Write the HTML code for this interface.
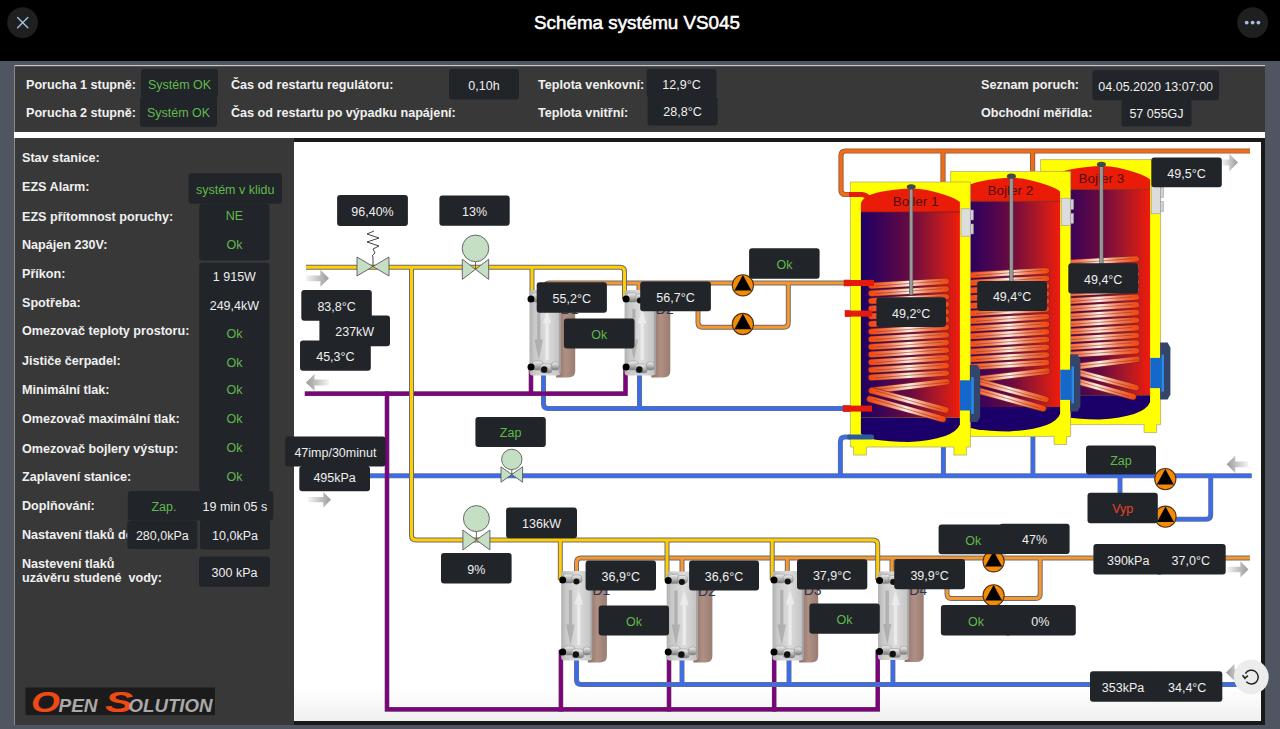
<!DOCTYPE html><html><head><meta charset="utf-8"><title>Schéma systému VS045</title><style>
html,body{margin:0;padding:0;width:1280px;height:729px;overflow:hidden;background:#000}svg{display:block}text{font-family:"Liberation Sans", sans-serif}
</style></head><body>
<svg width="1280" height="729" viewBox="0 0 1280 729">
<defs>
<linearGradient id="tankg" x1="0" x2="1" y1="0" y2="0"><stop offset="0" stop-color="#1e0064"/><stop offset="0.3" stop-color="#4a0550"/><stop offset="0.5" stop-color="#6a0a40"/><stop offset="0.75" stop-color="#a81828"/><stop offset="1" stop-color="#f01c0a"/></linearGradient>
<linearGradient id="coilg" x1="0" x2="1" y1="0" y2="0"><stop offset="0" stop-color="#f44810"/><stop offset="0.25" stop-color="#f5825a"/><stop offset="0.5" stop-color="#fff0e6"/><stop offset="0.75" stop-color="#f5825a"/><stop offset="1" stop-color="#f44810"/></linearGradient>
<linearGradient id="plateg" x1="0" x2="1" y1="0" y2="0"><stop offset="0" stop-color="#b0b0b0"/><stop offset="0.15" stop-color="#c8c8c8"/><stop offset="0.55" stop-color="#dcdcdc"/><stop offset="1" stop-color="#c2c2c2"/></linearGradient>
<linearGradient id="backg" x1="0" x2="1" y1="0" y2="0"><stop offset="0" stop-color="#8a6e64"/><stop offset="0.5" stop-color="#b09084"/><stop offset="1" stop-color="#9a7c70"/></linearGradient>
<linearGradient id="arrR" x1="0" x2="1" y1="0" y2="0"><stop offset="0" stop-color="#f4f4f4"/><stop offset="1" stop-color="#9a9a9a"/></linearGradient>
<linearGradient id="arrL" x1="1" x2="0" y1="0" y2="0"><stop offset="0" stop-color="#f4f4f4"/><stop offset="1" stop-color="#9a9a9a"/></linearGradient>
<linearGradient id="botg" x1="0" x2="0" y1="0" y2="1"><stop offset="0" stop-color="#ffffff"/><stop offset="1" stop-color="#f0f0f0"/></linearGradient>
<linearGradient id="fitg" x1="0" x2="0" y1="0" y2="1"><stop offset="0" stop-color="#f0f0f0"/><stop offset="0.5" stop-color="#b8b8b8"/><stop offset="1" stop-color="#7a7a7a"/></linearGradient>
</defs>
<rect x="0" y="0" width="1280" height="61" fill="#000"/>
<circle cx="22.6" cy="22.6" r="15.4" fill="#1e201f"/>
<path d="M17.6,17.6 L27.8,27.8 M27.8,17.6 L17.6,27.8" stroke="#a9bde0" stroke-width="1.4" stroke-linecap="round"/>
<circle cx="1252.6" cy="22.6" r="15.4" fill="#1e201f"/>
<circle cx="1246.7" cy="22.6" r="1.9" fill="#a9bde0"/>
<circle cx="1252.6" cy="22.6" r="1.9" fill="#a9bde0"/>
<circle cx="1258.4" cy="22.6" r="1.9" fill="#a9bde0"/>
<text x="637" y="28.5" font-size="19" fill="#fff" stroke="#fff" stroke-width="0.55" text-anchor="middle" textLength="206" lengthAdjust="spacingAndGlyphs">Schéma systému VS045</text>
<rect x="0" y="61" width="1280" height="668" fill="#4f5661"/>
<rect x="14" y="65" width="1251" height="67" fill="#383838"/>
<rect x="14" y="65" width="1251" height="1.2" fill="#c8c8c8"/>
<rect x="14" y="65" width="1" height="660" fill="#8a8a8a"/>
<rect x="14" y="132" width="1251" height="6" fill="#fdfdfd"/>
<rect x="15" y="138" width="279" height="587" fill="#383838"/>
<rect x="294" y="138" width="971" height="587" fill="#171a18"/>
<rect x="294" y="142" width="967" height="579" fill="#ffffff"/>
<rect x="294" y="688" width="967" height="33" fill="url(#botg)"/>
<text transform="translate(26,89) scale(0.935,1)" font-size="13.5" font-weight="bold" fill="#f0f0f0">Porucha 1 stupně:</text>
<text transform="translate(26,117) scale(0.935,1)" font-size="13.5" font-weight="bold" fill="#f0f0f0">Porucha 2 stupně:</text>
<text transform="translate(231,89) scale(0.935,1)" font-size="13.5" font-weight="bold" fill="#f0f0f0">Čas od restartu regulátoru:</text>
<text transform="translate(231,117) scale(0.935,1)" font-size="13.5" font-weight="bold" fill="#f0f0f0">Čas od restartu po výpadku napájení:</text>
<text transform="translate(538,89) scale(0.935,1)" font-size="13.5" font-weight="bold" fill="#f0f0f0">Teplota venkovní:</text>
<text transform="translate(538,117) scale(0.935,1)" font-size="13.5" font-weight="bold" fill="#f0f0f0">Teplota vnitřní:</text>
<text transform="translate(981,89) scale(0.935,1)" font-size="13.5" font-weight="bold" fill="#f0f0f0">Seznam poruch:</text>
<text transform="translate(981,117) scale(0.935,1)" font-size="13.5" font-weight="bold" fill="#f0f0f0">Obchodní měřidla:</text>
<rect x="141" y="69" width="77.0" height="29.0" rx="3" fill="#212428"/><text x="179.5" y="88.9" font-size="12.5" fill="#60ba4c" text-anchor="middle">Systém OK</text>
<rect x="140" y="97" width="77.0" height="30.0" rx="3" fill="#212428"/><text x="178.5" y="117.4" font-size="12.5" fill="#60ba4c" text-anchor="middle">Systém OK</text>
<rect x="449" y="69" width="70.0" height="30.5" rx="3" fill="#212428"/><text x="484.0" y="89.7" font-size="12.5" fill="#efefef" text-anchor="middle">0,10h</text>
<rect x="646.6" y="69" width="69.9" height="28.5" rx="3" fill="#212428"/><text x="681.5" y="88.7" font-size="12.5" fill="#efefef" text-anchor="middle">12,9°C</text>
<rect x="647.5" y="96.5" width="70.1" height="28.9" rx="3" fill="#212428"/><text x="682.5" y="116.4" font-size="12.5" fill="#efefef" text-anchor="middle">28,8°C</text>
<rect x="1092.4" y="70.3" width="126.6" height="30.0" rx="3" fill="#212428"/><text x="1155.7" y="90.7" font-size="12.5" fill="#efefef" text-anchor="middle">04.05.2020 13:07:00</text>
<rect x="1121.5" y="99.5" width="70.0" height="27.0" rx="3" fill="#212428"/><text x="1156.5" y="118.4" font-size="12.5" fill="#efefef" text-anchor="middle">57 055GJ</text>
<text transform="translate(22,162) scale(0.935,1)" font-size="13.5" font-weight="bold" fill="#f0f0f0">Stav stanice:</text>
<text transform="translate(22,191.4) scale(0.935,1)" font-size="13.5" font-weight="bold" fill="#f0f0f0">EZS Alarm:</text>
<text transform="translate(22,221) scale(0.935,1)" font-size="13.5" font-weight="bold" fill="#f0f0f0">EZS přítomnost poruchy:</text>
<text transform="translate(22,248.6) scale(0.935,1)" font-size="13.5" font-weight="bold" fill="#f0f0f0">Napájen 230V:</text>
<text transform="translate(22,277.5) scale(0.935,1)" font-size="13.5" font-weight="bold" fill="#f0f0f0">Příkon:</text>
<text transform="translate(22,307) scale(0.935,1)" font-size="13.5" font-weight="bold" fill="#f0f0f0">Spotřeba:</text>
<text transform="translate(22,335.4) scale(0.935,1)" font-size="13.5" font-weight="bold" fill="#f0f0f0">Omezovač teploty prostoru:</text>
<text transform="translate(22,364.8) scale(0.935,1)" font-size="13.5" font-weight="bold" fill="#f0f0f0">Jističe čerpadel:</text>
<text transform="translate(22,394) scale(0.935,1)" font-size="13.5" font-weight="bold" fill="#f0f0f0">Minimální tlak:</text>
<text transform="translate(22,423) scale(0.935,1)" font-size="13.5" font-weight="bold" fill="#f0f0f0">Omezovač maximální tlak:</text>
<text transform="translate(22,452.7) scale(0.935,1)" font-size="13.5" font-weight="bold" fill="#f0f0f0">Omezovač bojlery výstup:</text>
<text transform="translate(22,480.9) scale(0.935,1)" font-size="13.5" font-weight="bold" fill="#f0f0f0">Zaplavení stanice:</text>
<text transform="translate(22,509.5) scale(0.935,1)" font-size="13.5" font-weight="bold" fill="#f0f0f0">Doplňování:</text>
<text transform="translate(22,538.6) scale(0.935,1)" font-size="13.5" font-weight="bold" fill="#f0f0f0">Nastavení tlaků do</text>
<text transform="translate(22,567.5) scale(0.935,1)" font-size="13.5" font-weight="bold" fill="#f0f0f0">Nastevení tlaků</text>
<text transform="translate(22,581.7) scale(0.935,1)" font-size="13.5" font-weight="bold" fill="#f0f0f0">uzávěru studené&#160; vody:</text>
<rect x="188.6" y="173.3" width="93.3" height="30.4" rx="3" fill="#212428"/><text x="235.2" y="193.9" font-size="12.5" fill="#60ba4c" text-anchor="middle">systém v klidu</text>
<rect x="199.2" y="204" width="70.3" height="56.5" rx="3" fill="#212428"/>
<rect x="199.2" y="262.7" width="70.3" height="228.3" rx="3" fill="#212428"/>
<text x="234.4" y="220.2" font-size="12.5" fill="#60ba4c" text-anchor="middle">NE</text>
<text x="234.4" y="248.7" font-size="12.5" fill="#60ba4c" text-anchor="middle">Ok</text>
<text x="234.4" y="281.2" font-size="12.5" fill="#efefef" text-anchor="middle">1 915W</text>
<text x="234.4" y="309.7" font-size="12.5" fill="#efefef" text-anchor="middle">249,4kW</text>
<text x="234.4" y="338.2" font-size="12.5" fill="#60ba4c" text-anchor="middle">Ok</text>
<text x="234.4" y="367.2" font-size="12.5" fill="#60ba4c" text-anchor="middle">Ok</text>
<text x="234.4" y="394.2" font-size="12.5" fill="#60ba4c" text-anchor="middle">Ok</text>
<text x="234.4" y="423.2" font-size="12.5" fill="#60ba4c" text-anchor="middle">Ok</text>
<text x="234.4" y="452.2" font-size="12.5" fill="#60ba4c" text-anchor="middle">Ok</text>
<text x="234.4" y="481.2" font-size="12.5" fill="#60ba4c" text-anchor="middle">Ok</text>
<rect x="127.8" y="491" width="72.2" height="29.5" rx="3" fill="#212428"/><text x="163.9" y="511.1" font-size="12.5" fill="#60ba4c" text-anchor="middle">Zap.</text>
<rect x="196.7" y="491" width="76.5" height="29.5" rx="3" fill="#212428"/><text x="234.9" y="511.1" font-size="12.5" fill="#efefef" text-anchor="middle">19 min 05 s</text>
<rect x="127.3" y="520.5" width="70.0" height="28.5" rx="3" fill="#212428"/><text x="162.3" y="540.1" font-size="12.5" fill="#efefef" text-anchor="middle">280,0kPa</text>
<rect x="200" y="520" width="70.0" height="29.6" rx="3" fill="#212428"/><text x="235.0" y="540.2" font-size="12.5" fill="#efefef" text-anchor="middle">10,0kPa</text>
<rect x="199" y="556.6" width="71.0" height="30.2" rx="3" fill="#212428"/><text x="234.5" y="577.1" font-size="12.5" fill="#efefef" text-anchor="middle">300 kPa</text>
<path d="M543.5,370 V404 Q543.5,408.5 548,408.5 H846" fill="none" stroke="#6a7080" stroke-width="5" stroke-linejoin="round"/><path d="M639.5,370 V408.5" fill="none" stroke="#6a7080" stroke-width="5" stroke-linejoin="round"/><path d="M360,475.8 H1251.6" fill="none" stroke="#6a7080" stroke-width="5" stroke-linejoin="round"/><path d="M840.4,475.8 V441.5 Q840.4,437 845,437 H868" fill="none" stroke="#6a7080" stroke-width="5" stroke-linejoin="round"/><path d="M943.4,475.8 V447" fill="none" stroke="#6a7080" stroke-width="5" stroke-linejoin="round"/><path d="M1032.9,475.8 V435" fill="none" stroke="#6a7080" stroke-width="5" stroke-linejoin="round"/><path d="M1120,475.8 V493" fill="none" stroke="#6a7080" stroke-width="5" stroke-linejoin="round"/><path d="M1210.7,475.8 V514.8 Q1210.7,519.3 1206.2,519.3 H1165" fill="none" stroke="#6a7080" stroke-width="5" stroke-linejoin="round"/><path d="M543.5,370 V404 Q543.5,408.5 548,408.5 H846" fill="none" stroke="#3a6cf0" stroke-width="3.4" stroke-linejoin="round"/><path d="M639.5,370 V408.5" fill="none" stroke="#3a6cf0" stroke-width="3.4" stroke-linejoin="round"/><path d="M360,475.8 H1251.6" fill="none" stroke="#3a6cf0" stroke-width="3.4" stroke-linejoin="round"/><path d="M840.4,475.8 V441.5 Q840.4,437 845,437 H868" fill="none" stroke="#3a6cf0" stroke-width="3.4" stroke-linejoin="round"/><path d="M943.4,475.8 V447" fill="none" stroke="#3a6cf0" stroke-width="3.4" stroke-linejoin="round"/><path d="M1032.9,475.8 V435" fill="none" stroke="#3a6cf0" stroke-width="3.4" stroke-linejoin="round"/><path d="M1120,475.8 V493" fill="none" stroke="#3a6cf0" stroke-width="3.4" stroke-linejoin="round"/><path d="M1210.7,475.8 V514.8 Q1210.7,519.3 1206.2,519.3 H1165" fill="none" stroke="#3a6cf0" stroke-width="3.4" stroke-linejoin="round"/>
<path d="M545,299 V287.5 Q545,283 549.5,283 H844" fill="none" stroke="#6e6a78" stroke-width="5" stroke-linejoin="round"/><path d="M639,283 V299" fill="none" stroke="#6e6a78" stroke-width="5" stroke-linejoin="round"/><path d="M698,311 V322.7 Q698,327.2 702.5,327.2 H783.8 Q788.3,327.2 788.3,322.7 V283" fill="none" stroke="#6e6a78" stroke-width="5" stroke-linejoin="round"/><path d="M576.5,581 V562.5 Q576.5,558 581,558 H1250" fill="none" stroke="#6e6a78" stroke-width="5" stroke-linejoin="round"/><path d="M682,558 V581" fill="none" stroke="#6e6a78" stroke-width="5" stroke-linejoin="round"/><path d="M787.3,558 V581" fill="none" stroke="#6e6a78" stroke-width="5" stroke-linejoin="round"/><path d="M892,558 V581" fill="none" stroke="#6e6a78" stroke-width="5" stroke-linejoin="round"/><path d="M947,589 V593.9 Q947,598.4 951.5,598.4 H1035.7 Q1040.2,598.4 1040.2,593.9 V558" fill="none" stroke="#6e6a78" stroke-width="5" stroke-linejoin="round"/><path d="M545,299 V287.5 Q545,283 549.5,283 H844" fill="none" stroke="#f7982a" stroke-width="3" stroke-linejoin="round"/><path d="M639,283 V299" fill="none" stroke="#f7982a" stroke-width="3" stroke-linejoin="round"/><path d="M698,311 V322.7 Q698,327.2 702.5,327.2 H783.8 Q788.3,327.2 788.3,322.7 V283" fill="none" stroke="#f7982a" stroke-width="3" stroke-linejoin="round"/><path d="M576.5,581 V562.5 Q576.5,558 581,558 H1250" fill="none" stroke="#f7982a" stroke-width="3" stroke-linejoin="round"/><path d="M682,558 V581" fill="none" stroke="#f7982a" stroke-width="3" stroke-linejoin="round"/><path d="M787.3,558 V581" fill="none" stroke="#f7982a" stroke-width="3" stroke-linejoin="round"/><path d="M892,558 V581" fill="none" stroke="#f7982a" stroke-width="3" stroke-linejoin="round"/><path d="M947,589 V593.9 Q947,598.4 951.5,598.4 H1035.7 Q1040.2,598.4 1040.2,593.9 V558" fill="none" stroke="#f7982a" stroke-width="3" stroke-linejoin="round"/>
<path d="M866,194.5 H845.5 Q841,194.5 841,190 V155.5 Q841,151 845.5,151 H1250" fill="none" stroke="#8a5a50" stroke-width="5.2" stroke-linejoin="round"/><path d="M943,151 V182" fill="none" stroke="#8a5a50" stroke-width="5.2" stroke-linejoin="round"/><path d="M1032.6,151 V171.5" fill="none" stroke="#8a5a50" stroke-width="5.2" stroke-linejoin="round"/><path d="M866,194.5 H845.5 Q841,194.5 841,190 V155.5 Q841,151 845.5,151 H1250" fill="none" stroke="#f36c10" stroke-width="3.4" stroke-linejoin="round"/><path d="M943,151 V182" fill="none" stroke="#f36c10" stroke-width="3.4" stroke-linejoin="round"/><path d="M1032.6,151 V171.5" fill="none" stroke="#f36c10" stroke-width="3.4" stroke-linejoin="round"/>
<path d="M307,393.6 H625.5 V367" fill="none" stroke="#5a3a5a" stroke-width="4.6" stroke-linejoin="miter" stroke-linecap="square"/><path d="M531,367 V393.6" fill="none" stroke="#5a3a5a" stroke-width="4.6" stroke-linejoin="miter" stroke-linecap="square"/><path d="M387,393.6 V709.4 H877.7 V652" fill="none" stroke="#5a3a5a" stroke-width="4.6" stroke-linejoin="miter" stroke-linecap="square"/><path d="M560.9,652 V709.4" fill="none" stroke="#5a3a5a" stroke-width="4.6" stroke-linejoin="miter" stroke-linecap="square"/><path d="M669,652 V709.4" fill="none" stroke="#5a3a5a" stroke-width="4.6" stroke-linejoin="miter" stroke-linecap="square"/><path d="M774.2,652 V709.4" fill="none" stroke="#5a3a5a" stroke-width="4.6" stroke-linejoin="miter" stroke-linecap="square"/><path d="M307,393.6 H625.5 V367" fill="none" stroke="#800080" stroke-width="3.4" stroke-linejoin="miter" stroke-linecap="square"/><path d="M531,367 V393.6" fill="none" stroke="#800080" stroke-width="3.4" stroke-linejoin="miter" stroke-linecap="square"/><path d="M387,393.6 V709.4 H877.7 V652" fill="none" stroke="#800080" stroke-width="3.4" stroke-linejoin="miter" stroke-linecap="square"/><path d="M560.9,652 V709.4" fill="none" stroke="#800080" stroke-width="3.4" stroke-linejoin="miter" stroke-linecap="square"/><path d="M669,652 V709.4" fill="none" stroke="#800080" stroke-width="3.4" stroke-linejoin="miter" stroke-linecap="square"/><path d="M774.2,652 V709.4" fill="none" stroke="#800080" stroke-width="3.4" stroke-linejoin="miter" stroke-linecap="square"/>
<path d="M576.5,655 V680.1 Q576.5,684.6 581,684.6 H1245" fill="none" stroke="#6a7080" stroke-width="5" stroke-linejoin="round"/><path d="M682,655 V684.6" fill="none" stroke="#6a7080" stroke-width="5" stroke-linejoin="round"/><path d="M789,655 V684.6" fill="none" stroke="#6a7080" stroke-width="5" stroke-linejoin="round"/><path d="M892.9,655 V684.6" fill="none" stroke="#6a7080" stroke-width="5" stroke-linejoin="round"/><path d="M576.5,655 V680.1 Q576.5,684.6 581,684.6 H1245" fill="none" stroke="#3a6cf0" stroke-width="3.4" stroke-linejoin="round"/><path d="M682,655 V684.6" fill="none" stroke="#3a6cf0" stroke-width="3.4" stroke-linejoin="round"/><path d="M789,655 V684.6" fill="none" stroke="#3a6cf0" stroke-width="3.4" stroke-linejoin="round"/><path d="M892.9,655 V684.6" fill="none" stroke="#3a6cf0" stroke-width="3.4" stroke-linejoin="round"/>
<path d="M306,267.3 H620 Q624.5,267.3 624.5,271.8 V299" fill="none" stroke="#6e6a78" stroke-width="5" stroke-linejoin="round"/><path d="M532,267.3 V299" fill="none" stroke="#6e6a78" stroke-width="5" stroke-linejoin="round"/><path d="M411.5,267.3 V535.5 Q411.5,540 416,540 H873 Q877.7,540 877.7,544.5 V580" fill="none" stroke="#6e6a78" stroke-width="5" stroke-linejoin="round"/><path d="M560.3,540 V580" fill="none" stroke="#6e6a78" stroke-width="5" stroke-linejoin="round"/><path d="M667,540 V580" fill="none" stroke="#6e6a78" stroke-width="5" stroke-linejoin="round"/><path d="M772.2,540 V580" fill="none" stroke="#6e6a78" stroke-width="5" stroke-linejoin="round"/><path d="M306,267.3 H620 Q624.5,267.3 624.5,271.8 V299" fill="none" stroke="#ffcf00" stroke-width="3" stroke-linejoin="round"/><path d="M532,267.3 V299" fill="none" stroke="#ffcf00" stroke-width="3" stroke-linejoin="round"/><path d="M411.5,267.3 V535.5 Q411.5,540 416,540 H873 Q877.7,540 877.7,544.5 V580" fill="none" stroke="#ffcf00" stroke-width="3" stroke-linejoin="round"/><path d="M560.3,540 V580" fill="none" stroke="#ffcf00" stroke-width="3" stroke-linejoin="round"/><path d="M667,540 V580" fill="none" stroke="#ffcf00" stroke-width="3" stroke-linejoin="round"/><path d="M772.2,540 V580" fill="none" stroke="#ffcf00" stroke-width="3" stroke-linejoin="round"/>
<rect x="844" y="280" width="30" height="6" fill="#e41a0c" stroke="#a02020" stroke-width="0.5"/>
<rect x="845" y="310.6" width="27" height="6" fill="#e41a0c" stroke="#a02020" stroke-width="0.5"/>
<rect x="843" y="405.6" width="29" height="6" fill="#e41a0c" stroke="#a02020" stroke-width="0.5"/>
<path d="M1040.6,159.6 H1160.6 V424.6 H1156.6 V432.6 H1144.1 V424.6 H1056.6 V432.6 H1043.6 V424.6 H1040.6 Z" fill="#ffff00" stroke="#a8a070" stroke-width="0.7"/><path d="M1051.1,189.6 V181.6 Q1052.1,173.6 1070.1,169.6 Q1100.1,163.6 1117.1,167.6 Q1143.1,173.6 1150.1,179.6 V189.6 Z" fill="#ea1c08"/><rect x="1051.1" y="189.6" width="99" height="205.69999999999996" fill="url(#tankg)"/><line x1="1051.1" y1="189.6" x2="1150.1" y2="189.6" stroke="#7a2020" stroke-width="0.8"/><path d="M1051.1,395.29999999999995 H1150.1 V402.1 Q1144.1,417.1 1099.1,419.6 Q1057.1,419.1 1051.1,411.1 Z" fill="#1a0068"/><text x="1101.3" y="183.1" font-size="13.5" fill="#501010" text-anchor="middle">Bojler 3</text><line x1="1061.6" y1="263.3" x2="1136.6" y2="258.90000000000003" stroke="#7a2a28" stroke-width="6.6000000000000005" stroke-linecap="round"/><line x1="1061.6" y1="263.3" x2="1136.6" y2="258.90000000000003" stroke="url(#coilg)" stroke-width="5.4" stroke-linecap="round"/><line x1="1065.6" y1="263.6" x2="1132.6" y2="258.6" stroke="#8a3828" stroke-width="0.8" opacity="0.7"/><line x1="1061.6" y1="270.95" x2="1136.6" y2="266.55" stroke="#7a2a28" stroke-width="6.6000000000000005" stroke-linecap="round"/><line x1="1061.6" y1="270.95" x2="1136.6" y2="266.55" stroke="url(#coilg)" stroke-width="5.4" stroke-linecap="round"/><line x1="1065.6" y1="271.25" x2="1132.6" y2="266.25" stroke="#8a3828" stroke-width="0.8" opacity="0.7"/><line x1="1061.6" y1="278.6" x2="1136.6" y2="274.20000000000005" stroke="#7a2a28" stroke-width="6.6000000000000005" stroke-linecap="round"/><line x1="1061.6" y1="278.6" x2="1136.6" y2="274.20000000000005" stroke="url(#coilg)" stroke-width="5.4" stroke-linecap="round"/><line x1="1065.6" y1="278.90000000000003" x2="1132.6" y2="273.90000000000003" stroke="#8a3828" stroke-width="0.8" opacity="0.7"/><line x1="1061.6" y1="286.25" x2="1136.6" y2="281.85" stroke="#7a2a28" stroke-width="6.6000000000000005" stroke-linecap="round"/><line x1="1061.6" y1="286.25" x2="1136.6" y2="281.85" stroke="url(#coilg)" stroke-width="5.4" stroke-linecap="round"/><line x1="1065.6" y1="286.55" x2="1132.6" y2="281.55" stroke="#8a3828" stroke-width="0.8" opacity="0.7"/><line x1="1061.6" y1="293.90000000000003" x2="1136.6" y2="289.50000000000006" stroke="#7a2a28" stroke-width="6.6000000000000005" stroke-linecap="round"/><line x1="1061.6" y1="293.90000000000003" x2="1136.6" y2="289.50000000000006" stroke="url(#coilg)" stroke-width="5.4" stroke-linecap="round"/><line x1="1065.6" y1="294.20000000000005" x2="1132.6" y2="289.20000000000005" stroke="#8a3828" stroke-width="0.8" opacity="0.7"/><line x1="1061.6" y1="301.55" x2="1136.6" y2="297.15000000000003" stroke="#7a2a28" stroke-width="6.6000000000000005" stroke-linecap="round"/><line x1="1061.6" y1="301.55" x2="1136.6" y2="297.15000000000003" stroke="url(#coilg)" stroke-width="5.4" stroke-linecap="round"/><line x1="1065.6" y1="301.85" x2="1132.6" y2="296.85" stroke="#8a3828" stroke-width="0.8" opacity="0.7"/><line x1="1061.6" y1="309.2" x2="1136.6" y2="304.8" stroke="#7a2a28" stroke-width="6.6000000000000005" stroke-linecap="round"/><line x1="1061.6" y1="309.2" x2="1136.6" y2="304.8" stroke="url(#coilg)" stroke-width="5.4" stroke-linecap="round"/><line x1="1065.6" y1="309.5" x2="1132.6" y2="304.5" stroke="#8a3828" stroke-width="0.8" opacity="0.7"/><line x1="1061.6" y1="316.85" x2="1136.6" y2="312.45000000000005" stroke="#7a2a28" stroke-width="6.6000000000000005" stroke-linecap="round"/><line x1="1061.6" y1="316.85" x2="1136.6" y2="312.45000000000005" stroke="url(#coilg)" stroke-width="5.4" stroke-linecap="round"/><line x1="1065.6" y1="317.15000000000003" x2="1132.6" y2="312.15000000000003" stroke="#8a3828" stroke-width="0.8" opacity="0.7"/><line x1="1061.6" y1="324.5" x2="1136.6" y2="320.1" stroke="#7a2a28" stroke-width="6.6000000000000005" stroke-linecap="round"/><line x1="1061.6" y1="324.5" x2="1136.6" y2="320.1" stroke="url(#coilg)" stroke-width="5.4" stroke-linecap="round"/><line x1="1065.6" y1="324.8" x2="1132.6" y2="319.8" stroke="#8a3828" stroke-width="0.8" opacity="0.7"/><line x1="1061.6" y1="332.15000000000003" x2="1136.6" y2="327.75000000000006" stroke="#7a2a28" stroke-width="6.6000000000000005" stroke-linecap="round"/><line x1="1061.6" y1="332.15000000000003" x2="1136.6" y2="327.75000000000006" stroke="url(#coilg)" stroke-width="5.4" stroke-linecap="round"/><line x1="1065.6" y1="332.45000000000005" x2="1132.6" y2="327.45000000000005" stroke="#8a3828" stroke-width="0.8" opacity="0.7"/><line x1="1061.6" y1="339.8" x2="1136.6" y2="335.40000000000003" stroke="#7a2a28" stroke-width="6.6000000000000005" stroke-linecap="round"/><line x1="1061.6" y1="339.8" x2="1136.6" y2="335.40000000000003" stroke="url(#coilg)" stroke-width="5.4" stroke-linecap="round"/><line x1="1065.6" y1="340.1" x2="1132.6" y2="335.1" stroke="#8a3828" stroke-width="0.8" opacity="0.7"/><line x1="1061.6" y1="347.45" x2="1136.6" y2="343.05" stroke="#7a2a28" stroke-width="6.6000000000000005" stroke-linecap="round"/><line x1="1061.6" y1="347.45" x2="1136.6" y2="343.05" stroke="url(#coilg)" stroke-width="5.4" stroke-linecap="round"/><line x1="1065.6" y1="347.75" x2="1132.6" y2="342.75" stroke="#8a3828" stroke-width="0.8" opacity="0.7"/><line x1="1061.6" y1="355.1" x2="1136.6" y2="350.70000000000005" stroke="#7a2a28" stroke-width="6.6000000000000005" stroke-linecap="round"/><line x1="1061.6" y1="355.1" x2="1136.6" y2="350.70000000000005" stroke="url(#coilg)" stroke-width="5.4" stroke-linecap="round"/><line x1="1065.6" y1="355.40000000000003" x2="1132.6" y2="350.40000000000003" stroke="#8a3828" stroke-width="0.8" opacity="0.7"/><line x1="1137.1" y1="359.29999999999995" x2="1062.1" y2="368.2" stroke="#7a2a28" stroke-width="6.8" stroke-linecap="round"/><line x1="1137.1" y1="359.29999999999995" x2="1062.1" y2="368.2" stroke="url(#coilg)" stroke-width="5.6" stroke-linecap="round"/><line x1="1141.1" y1="359.59999999999997" x2="1058.1" y2="367.9" stroke="#8a3828" stroke-width="0.8" opacity="0.7"/><line x1="1062.1" y1="368.2" x2="1136.1" y2="387.6" stroke="#7a2a28" stroke-width="6.8" stroke-linecap="round"/><line x1="1062.1" y1="368.2" x2="1136.1" y2="387.6" stroke="url(#coilg)" stroke-width="5.6" stroke-linecap="round"/><line x1="1066.1" y1="368.5" x2="1132.1" y2="387.3" stroke="#8a3828" stroke-width="0.8" opacity="0.7"/><line x1="1060.1" y1="376.6" x2="1133.1" y2="396.6" stroke="#7a2a28" stroke-width="6.8" stroke-linecap="round"/><line x1="1060.1" y1="376.6" x2="1133.1" y2="396.6" stroke="url(#coilg)" stroke-width="5.6" stroke-linecap="round"/><line x1="1064.1" y1="376.90000000000003" x2="1129.1" y2="396.3" stroke="#8a3828" stroke-width="0.8" opacity="0.7"/><rect x="1099.6999999999998" y="163.6" width="3.4" height="109" fill="#9a9a9a" stroke="#4a4a4a" stroke-width="0.6"/><ellipse cx="1101.3999999999999" cy="164.4" rx="4.5" ry="2.6" fill="#404848"/><rect x="1151.1999999999998" y="186.4" width="9.4" height="27.4" fill="#dcdcdc" stroke="#9a9a9a" stroke-width="0.6"/><rect x="1160.6" y="187.6" width="3" height="10" fill="#d0d0d0" stroke="#999" stroke-width="0.5"/><rect x="1160.6" y="201.6" width="3" height="10" fill="#d0d0d0" stroke="#999" stroke-width="0.5"/><path d="M1160.1,342.6 H1167.6 L1170.3999999999999,347.6 V394.6 L1167.6,399.6 H1160.1 Z" fill="#34446a"/><rect x="1161.3999999999999" y="354.6" width="2.6" height="37" fill="#2a8ae0"/><rect x="1150.1999999999998" y="357.9" width="11" height="30.2" fill="#1468cc"/>
<path d="M950.6,171.4 H1070.6 V436.4 H1066.6 V444.4 H1054.1 V436.4 H966.6 V444.4 H953.6 V436.4 H950.6 Z" fill="#ffff00" stroke="#a8a070" stroke-width="0.7"/><path d="M961.1,201.4 V193.4 Q962.1,185.4 980.1,181.4 Q1010.1,175.4 1027.1,179.4 Q1053.1,185.4 1060.1,191.4 V201.4 Z" fill="#ea1c08"/><rect x="961.1" y="201.4" width="99" height="205.70000000000002" fill="url(#tankg)"/><line x1="961.1" y1="201.4" x2="1060.1" y2="201.4" stroke="#7a2020" stroke-width="0.8"/><path d="M961.1,407.1 H1060.1 V413.9 Q1054.1,428.9 1009.1,431.4 Q967.1,430.9 961.1,422.9 Z" fill="#1a0068"/><text x="1010.4" y="194.9" font-size="13.5" fill="#501010" text-anchor="middle">Bojler 2</text><line x1="971.6" y1="275.09999999999997" x2="1046.6" y2="270.7" stroke="#7a2a28" stroke-width="6.6000000000000005" stroke-linecap="round"/><line x1="971.6" y1="275.09999999999997" x2="1046.6" y2="270.7" stroke="url(#coilg)" stroke-width="5.4" stroke-linecap="round"/><line x1="975.6" y1="275.4" x2="1042.6" y2="270.4" stroke="#8a3828" stroke-width="0.8" opacity="0.7"/><line x1="971.6" y1="282.74999999999994" x2="1046.6" y2="278.34999999999997" stroke="#7a2a28" stroke-width="6.6000000000000005" stroke-linecap="round"/><line x1="971.6" y1="282.74999999999994" x2="1046.6" y2="278.34999999999997" stroke="url(#coilg)" stroke-width="5.4" stroke-linecap="round"/><line x1="975.6" y1="283.04999999999995" x2="1042.6" y2="278.04999999999995" stroke="#8a3828" stroke-width="0.8" opacity="0.7"/><line x1="971.6" y1="290.4" x2="1046.6" y2="286.0" stroke="#7a2a28" stroke-width="6.6000000000000005" stroke-linecap="round"/><line x1="971.6" y1="290.4" x2="1046.6" y2="286.0" stroke="url(#coilg)" stroke-width="5.4" stroke-linecap="round"/><line x1="975.6" y1="290.7" x2="1042.6" y2="285.7" stroke="#8a3828" stroke-width="0.8" opacity="0.7"/><line x1="971.6" y1="298.04999999999995" x2="1046.6" y2="293.65" stroke="#7a2a28" stroke-width="6.6000000000000005" stroke-linecap="round"/><line x1="971.6" y1="298.04999999999995" x2="1046.6" y2="293.65" stroke="url(#coilg)" stroke-width="5.4" stroke-linecap="round"/><line x1="975.6" y1="298.34999999999997" x2="1042.6" y2="293.34999999999997" stroke="#8a3828" stroke-width="0.8" opacity="0.7"/><line x1="971.6" y1="305.7" x2="1046.6" y2="301.3" stroke="#7a2a28" stroke-width="6.6000000000000005" stroke-linecap="round"/><line x1="971.6" y1="305.7" x2="1046.6" y2="301.3" stroke="url(#coilg)" stroke-width="5.4" stroke-linecap="round"/><line x1="975.6" y1="306.0" x2="1042.6" y2="301.0" stroke="#8a3828" stroke-width="0.8" opacity="0.7"/><line x1="971.6" y1="313.34999999999997" x2="1046.6" y2="308.95" stroke="#7a2a28" stroke-width="6.6000000000000005" stroke-linecap="round"/><line x1="971.6" y1="313.34999999999997" x2="1046.6" y2="308.95" stroke="url(#coilg)" stroke-width="5.4" stroke-linecap="round"/><line x1="975.6" y1="313.65" x2="1042.6" y2="308.65" stroke="#8a3828" stroke-width="0.8" opacity="0.7"/><line x1="971.6" y1="320.99999999999994" x2="1046.6" y2="316.59999999999997" stroke="#7a2a28" stroke-width="6.6000000000000005" stroke-linecap="round"/><line x1="971.6" y1="320.99999999999994" x2="1046.6" y2="316.59999999999997" stroke="url(#coilg)" stroke-width="5.4" stroke-linecap="round"/><line x1="975.6" y1="321.29999999999995" x2="1042.6" y2="316.29999999999995" stroke="#8a3828" stroke-width="0.8" opacity="0.7"/><line x1="971.6" y1="328.65" x2="1046.6" y2="324.25" stroke="#7a2a28" stroke-width="6.6000000000000005" stroke-linecap="round"/><line x1="971.6" y1="328.65" x2="1046.6" y2="324.25" stroke="url(#coilg)" stroke-width="5.4" stroke-linecap="round"/><line x1="975.6" y1="328.95" x2="1042.6" y2="323.95" stroke="#8a3828" stroke-width="0.8" opacity="0.7"/><line x1="971.6" y1="336.29999999999995" x2="1046.6" y2="331.9" stroke="#7a2a28" stroke-width="6.6000000000000005" stroke-linecap="round"/><line x1="971.6" y1="336.29999999999995" x2="1046.6" y2="331.9" stroke="url(#coilg)" stroke-width="5.4" stroke-linecap="round"/><line x1="975.6" y1="336.59999999999997" x2="1042.6" y2="331.59999999999997" stroke="#8a3828" stroke-width="0.8" opacity="0.7"/><line x1="971.6" y1="343.95" x2="1046.6" y2="339.55" stroke="#7a2a28" stroke-width="6.6000000000000005" stroke-linecap="round"/><line x1="971.6" y1="343.95" x2="1046.6" y2="339.55" stroke="url(#coilg)" stroke-width="5.4" stroke-linecap="round"/><line x1="975.6" y1="344.25" x2="1042.6" y2="339.25" stroke="#8a3828" stroke-width="0.8" opacity="0.7"/><line x1="971.6" y1="351.59999999999997" x2="1046.6" y2="347.2" stroke="#7a2a28" stroke-width="6.6000000000000005" stroke-linecap="round"/><line x1="971.6" y1="351.59999999999997" x2="1046.6" y2="347.2" stroke="url(#coilg)" stroke-width="5.4" stroke-linecap="round"/><line x1="975.6" y1="351.9" x2="1042.6" y2="346.9" stroke="#8a3828" stroke-width="0.8" opacity="0.7"/><line x1="971.6" y1="359.24999999999994" x2="1046.6" y2="354.84999999999997" stroke="#7a2a28" stroke-width="6.6000000000000005" stroke-linecap="round"/><line x1="971.6" y1="359.24999999999994" x2="1046.6" y2="354.84999999999997" stroke="url(#coilg)" stroke-width="5.4" stroke-linecap="round"/><line x1="975.6" y1="359.54999999999995" x2="1042.6" y2="354.54999999999995" stroke="#8a3828" stroke-width="0.8" opacity="0.7"/><line x1="971.6" y1="366.9" x2="1046.6" y2="362.5" stroke="#7a2a28" stroke-width="6.6000000000000005" stroke-linecap="round"/><line x1="971.6" y1="366.9" x2="1046.6" y2="362.5" stroke="url(#coilg)" stroke-width="5.4" stroke-linecap="round"/><line x1="975.6" y1="367.2" x2="1042.6" y2="362.2" stroke="#8a3828" stroke-width="0.8" opacity="0.7"/><line x1="1047.1" y1="371.1" x2="972.1" y2="380.0" stroke="#7a2a28" stroke-width="6.8" stroke-linecap="round"/><line x1="1047.1" y1="371.1" x2="972.1" y2="380.0" stroke="url(#coilg)" stroke-width="5.6" stroke-linecap="round"/><line x1="1051.1" y1="371.40000000000003" x2="968.1" y2="379.7" stroke="#8a3828" stroke-width="0.8" opacity="0.7"/><line x1="972.1" y1="380.0" x2="1046.1" y2="399.4" stroke="#7a2a28" stroke-width="6.8" stroke-linecap="round"/><line x1="972.1" y1="380.0" x2="1046.1" y2="399.4" stroke="url(#coilg)" stroke-width="5.6" stroke-linecap="round"/><line x1="976.1" y1="380.3" x2="1042.1" y2="399.09999999999997" stroke="#8a3828" stroke-width="0.8" opacity="0.7"/><line x1="970.1" y1="388.4" x2="1043.1" y2="408.4" stroke="#7a2a28" stroke-width="6.8" stroke-linecap="round"/><line x1="970.1" y1="388.4" x2="1043.1" y2="408.4" stroke="url(#coilg)" stroke-width="5.6" stroke-linecap="round"/><line x1="974.1" y1="388.7" x2="1039.1" y2="408.09999999999997" stroke="#8a3828" stroke-width="0.8" opacity="0.7"/><rect x="1009.6999999999999" y="175.4" width="3.4" height="109" fill="#9a9a9a" stroke="#4a4a4a" stroke-width="0.6"/><ellipse cx="1011.4" cy="176.20000000000002" rx="4.5" ry="2.6" fill="#404848"/><rect x="1061.2" y="198.20000000000002" width="9.4" height="27.4" fill="#dcdcdc" stroke="#9a9a9a" stroke-width="0.6"/><rect x="1070.6" y="199.4" width="3" height="10" fill="#d0d0d0" stroke="#999" stroke-width="0.5"/><rect x="1070.6" y="213.4" width="3" height="10" fill="#d0d0d0" stroke="#999" stroke-width="0.5"/><path d="M1070.1,354.4 H1077.6 L1080.4,359.4 V406.4 L1077.6,411.4 H1070.1 Z" fill="#34446a"/><rect x="1071.4" y="366.4" width="2.6" height="37" fill="#2a8ae0"/><rect x="1060.2" y="369.70000000000005" width="11" height="30.2" fill="#1468cc"/>
<path d="M850.4,182 H970.4 V447 H966.4 V455 H953.9 V447 H866.4 V455 H853.4 V447 H850.4 Z" fill="#ffff00" stroke="#a8a070" stroke-width="0.7"/><path d="M860.9,212 V204 Q861.9,196 879.9,192 Q909.9,186 926.9,190 Q952.9,196 959.9,202 V212 Z" fill="#ea1c08"/><rect x="860.9" y="212" width="99" height="205.7" fill="url(#tankg)"/><line x1="860.9" y1="212" x2="959.9" y2="212" stroke="#7a2020" stroke-width="0.8"/><path d="M860.9,417.7 H959.9 V424.5 Q953.9,439.5 908.9,442.0 Q866.9,441.5 860.9,433.5 Z" fill="#1a0068"/><text x="915.7" y="205.5" font-size="13.5" fill="#501010" text-anchor="middle">Bojler 1</text><line x1="871.4" y1="285.7" x2="946.4" y2="281.3" stroke="#7a2a28" stroke-width="6.6000000000000005" stroke-linecap="round"/><line x1="871.4" y1="285.7" x2="946.4" y2="281.3" stroke="url(#coilg)" stroke-width="5.4" stroke-linecap="round"/><line x1="875.4" y1="286.0" x2="942.4" y2="281.0" stroke="#8a3828" stroke-width="0.8" opacity="0.7"/><line x1="871.4" y1="293.34999999999997" x2="946.4" y2="288.95" stroke="#7a2a28" stroke-width="6.6000000000000005" stroke-linecap="round"/><line x1="871.4" y1="293.34999999999997" x2="946.4" y2="288.95" stroke="url(#coilg)" stroke-width="5.4" stroke-linecap="round"/><line x1="875.4" y1="293.65" x2="942.4" y2="288.65" stroke="#8a3828" stroke-width="0.8" opacity="0.7"/><line x1="871.4" y1="301.0" x2="946.4" y2="296.6" stroke="#7a2a28" stroke-width="6.6000000000000005" stroke-linecap="round"/><line x1="871.4" y1="301.0" x2="946.4" y2="296.6" stroke="url(#coilg)" stroke-width="5.4" stroke-linecap="round"/><line x1="875.4" y1="301.3" x2="942.4" y2="296.3" stroke="#8a3828" stroke-width="0.8" opacity="0.7"/><line x1="871.4" y1="308.65" x2="946.4" y2="304.25" stroke="#7a2a28" stroke-width="6.6000000000000005" stroke-linecap="round"/><line x1="871.4" y1="308.65" x2="946.4" y2="304.25" stroke="url(#coilg)" stroke-width="5.4" stroke-linecap="round"/><line x1="875.4" y1="308.95" x2="942.4" y2="303.95" stroke="#8a3828" stroke-width="0.8" opacity="0.7"/><line x1="871.4" y1="316.3" x2="946.4" y2="311.90000000000003" stroke="#7a2a28" stroke-width="6.6000000000000005" stroke-linecap="round"/><line x1="871.4" y1="316.3" x2="946.4" y2="311.90000000000003" stroke="url(#coilg)" stroke-width="5.4" stroke-linecap="round"/><line x1="875.4" y1="316.6" x2="942.4" y2="311.6" stroke="#8a3828" stroke-width="0.8" opacity="0.7"/><line x1="871.4" y1="323.95" x2="946.4" y2="319.55" stroke="#7a2a28" stroke-width="6.6000000000000005" stroke-linecap="round"/><line x1="871.4" y1="323.95" x2="946.4" y2="319.55" stroke="url(#coilg)" stroke-width="5.4" stroke-linecap="round"/><line x1="875.4" y1="324.25" x2="942.4" y2="319.25" stroke="#8a3828" stroke-width="0.8" opacity="0.7"/><line x1="871.4" y1="331.59999999999997" x2="946.4" y2="327.2" stroke="#7a2a28" stroke-width="6.6000000000000005" stroke-linecap="round"/><line x1="871.4" y1="331.59999999999997" x2="946.4" y2="327.2" stroke="url(#coilg)" stroke-width="5.4" stroke-linecap="round"/><line x1="875.4" y1="331.9" x2="942.4" y2="326.9" stroke="#8a3828" stroke-width="0.8" opacity="0.7"/><line x1="871.4" y1="339.25" x2="946.4" y2="334.85" stroke="#7a2a28" stroke-width="6.6000000000000005" stroke-linecap="round"/><line x1="871.4" y1="339.25" x2="946.4" y2="334.85" stroke="url(#coilg)" stroke-width="5.4" stroke-linecap="round"/><line x1="875.4" y1="339.55" x2="942.4" y2="334.55" stroke="#8a3828" stroke-width="0.8" opacity="0.7"/><line x1="871.4" y1="346.9" x2="946.4" y2="342.5" stroke="#7a2a28" stroke-width="6.6000000000000005" stroke-linecap="round"/><line x1="871.4" y1="346.9" x2="946.4" y2="342.5" stroke="url(#coilg)" stroke-width="5.4" stroke-linecap="round"/><line x1="875.4" y1="347.2" x2="942.4" y2="342.2" stroke="#8a3828" stroke-width="0.8" opacity="0.7"/><line x1="871.4" y1="354.55" x2="946.4" y2="350.15000000000003" stroke="#7a2a28" stroke-width="6.6000000000000005" stroke-linecap="round"/><line x1="871.4" y1="354.55" x2="946.4" y2="350.15000000000003" stroke="url(#coilg)" stroke-width="5.4" stroke-linecap="round"/><line x1="875.4" y1="354.85" x2="942.4" y2="349.85" stroke="#8a3828" stroke-width="0.8" opacity="0.7"/><line x1="871.4" y1="362.2" x2="946.4" y2="357.8" stroke="#7a2a28" stroke-width="6.6000000000000005" stroke-linecap="round"/><line x1="871.4" y1="362.2" x2="946.4" y2="357.8" stroke="url(#coilg)" stroke-width="5.4" stroke-linecap="round"/><line x1="875.4" y1="362.5" x2="942.4" y2="357.5" stroke="#8a3828" stroke-width="0.8" opacity="0.7"/><line x1="871.4" y1="369.84999999999997" x2="946.4" y2="365.45" stroke="#7a2a28" stroke-width="6.6000000000000005" stroke-linecap="round"/><line x1="871.4" y1="369.84999999999997" x2="946.4" y2="365.45" stroke="url(#coilg)" stroke-width="5.4" stroke-linecap="round"/><line x1="875.4" y1="370.15" x2="942.4" y2="365.15" stroke="#8a3828" stroke-width="0.8" opacity="0.7"/><line x1="871.4" y1="377.5" x2="946.4" y2="373.1" stroke="#7a2a28" stroke-width="6.6000000000000005" stroke-linecap="round"/><line x1="871.4" y1="377.5" x2="946.4" y2="373.1" stroke="url(#coilg)" stroke-width="5.4" stroke-linecap="round"/><line x1="875.4" y1="377.8" x2="942.4" y2="372.8" stroke="#8a3828" stroke-width="0.8" opacity="0.7"/><line x1="946.9" y1="381.7" x2="871.9" y2="390.6" stroke="#7a2a28" stroke-width="6.8" stroke-linecap="round"/><line x1="946.9" y1="381.7" x2="871.9" y2="390.6" stroke="url(#coilg)" stroke-width="5.6" stroke-linecap="round"/><line x1="950.9" y1="382.0" x2="867.9" y2="390.3" stroke="#8a3828" stroke-width="0.8" opacity="0.7"/><line x1="871.9" y1="390.6" x2="945.9" y2="410" stroke="#7a2a28" stroke-width="6.8" stroke-linecap="round"/><line x1="871.9" y1="390.6" x2="945.9" y2="410" stroke="url(#coilg)" stroke-width="5.6" stroke-linecap="round"/><line x1="875.9" y1="390.90000000000003" x2="941.9" y2="409.7" stroke="#8a3828" stroke-width="0.8" opacity="0.7"/><line x1="869.9" y1="399" x2="942.9" y2="419" stroke="#7a2a28" stroke-width="6.8" stroke-linecap="round"/><line x1="869.9" y1="399" x2="942.9" y2="419" stroke="url(#coilg)" stroke-width="5.6" stroke-linecap="round"/><line x1="873.9" y1="399.3" x2="938.9" y2="418.7" stroke="#8a3828" stroke-width="0.8" opacity="0.7"/><rect x="909.4999999999999" y="186" width="3.4" height="109" fill="#9a9a9a" stroke="#4a4a4a" stroke-width="0.6"/><ellipse cx="911.1999999999999" cy="186.8" rx="4.5" ry="2.6" fill="#404848"/><rect x="961.0" y="208.8" width="9.4" height="27.4" fill="#dcdcdc" stroke="#9a9a9a" stroke-width="0.6"/><rect x="970.4" y="210" width="3" height="10" fill="#d0d0d0" stroke="#999" stroke-width="0.5"/><rect x="970.4" y="224" width="3" height="10" fill="#d0d0d0" stroke="#999" stroke-width="0.5"/><path d="M969.9,365 H977.4 L980.2,370 V417 L977.4,422 H969.9 Z" fill="#34446a"/><rect x="971.1999999999999" y="377" width="2.6" height="37" fill="#2a8ae0"/><rect x="960.0" y="380.3" width="11" height="30.2" fill="#1468cc"/>
<rect x="847" y="434.5" width="27" height="5" rx="2" fill="#2a5aa0"/>
<rect x="844" y="280" width="30" height="6" fill="#e41a0c"/>
<rect x="845" y="310.6" width="27" height="6" fill="#e41a0c"/>
<rect x="843" y="405.6" width="29" height="6" fill="#e41a0c"/>
<path d="M849,194.5 H861 Q866,194.5 869,198.5" stroke="#e41a0c" stroke-width="5" fill="none"/>
<path d="M556.2,301 H572.2 Q575.2,301 575.2,305 V371 Q575.2,377.5 568.2,377.5 H556.2 Z" fill="url(#backg)"/><rect x="529.5" y="290" width="30.8" height="85.5" rx="3" fill="url(#plateg)"/><rect x="558.8000000000001" y="293" width="1.8" height="80" fill="#a6a6a6"/><path d="M537.2,309 V339.5 H534.6 L538.8000000000001,360 L543.0,339.5 H540.4000000000001 V309 Z" fill="#8a8a8a" opacity="0.45"/><path d="M545.5,360 V323.5 H542.8000000000001 L547.1,309.3 L551.4000000000001,323.5 H548.7 V360 Z" fill="#f2f2f2" opacity="0.7"/><rect x="531.2" y="293" width="11" height="9" rx="3" fill="url(#fitg)" stroke="#8a8a8a" stroke-width="0.5"/><rect x="540.2" y="294" width="10" height="8" rx="3" fill="url(#fitg)" stroke="#8a8a8a" stroke-width="0.5"/><rect x="532.2" y="361" width="11" height="9" rx="3" fill="url(#fitg)" stroke="#8a8a8a" stroke-width="0.5"/><rect x="540.2" y="364" width="12" height="9" rx="3" fill="url(#fitg)" stroke="#8a8a8a" stroke-width="0.5"/><rect x="551.2" y="362" width="8" height="8" rx="3" fill="url(#fitg)" stroke="#8a8a8a" stroke-width="0.5"/><circle cx="531.0" cy="299" r="3.5" fill="#000"/><circle cx="531.0" cy="367" r="3.5" fill="#000"/><circle cx="544.7" cy="300.5" r="3" fill="#111"/><circle cx="544.2" cy="369.5" r="3.2" fill="#111"/><text x="560.7" y="314" font-size="14" fill="#2a3552">D1</text>
<path d="M651.3,301 H667.3 Q670.3,301 670.3,305 V371 Q670.3,377.5 663.3,377.5 H651.3 Z" fill="url(#backg)"/><rect x="624.5999999999999" y="290" width="30.8" height="85.5" rx="3" fill="url(#plateg)"/><rect x="653.9" y="293" width="1.8" height="80" fill="#a6a6a6"/><path d="M632.3,309 V339.5 H629.6999999999999 L633.9,360 L638.0999999999999,339.5 H635.5 V309 Z" fill="#8a8a8a" opacity="0.45"/><path d="M640.5999999999999,360 V323.5 H637.9 L642.1999999999999,309.3 L646.5,323.5 H643.8 V360 Z" fill="#f2f2f2" opacity="0.7"/><rect x="626.3" y="293" width="11" height="9" rx="3" fill="url(#fitg)" stroke="#8a8a8a" stroke-width="0.5"/><rect x="635.3" y="294" width="10" height="8" rx="3" fill="url(#fitg)" stroke="#8a8a8a" stroke-width="0.5"/><rect x="627.3" y="361" width="11" height="9" rx="3" fill="url(#fitg)" stroke="#8a8a8a" stroke-width="0.5"/><rect x="635.3" y="364" width="12" height="9" rx="3" fill="url(#fitg)" stroke="#8a8a8a" stroke-width="0.5"/><rect x="646.3" y="362" width="8" height="8" rx="3" fill="url(#fitg)" stroke="#8a8a8a" stroke-width="0.5"/><circle cx="626.0999999999999" cy="299" r="3.5" fill="#000"/><circle cx="626.0999999999999" cy="367" r="3.5" fill="#000"/><circle cx="639.8" cy="300.5" r="3" fill="#111"/><circle cx="639.3" cy="369.5" r="3.2" fill="#111"/><text x="655.8" y="314" font-size="14" fill="#2a3552">D2</text>
<path d="M587.9,582 H603.9 Q606.9,582 606.9,586 V656 Q606.9,662.5 599.9,662.5 H587.9 Z" fill="url(#backg)"/><rect x="561.1999999999999" y="571" width="30.8" height="89.5" rx="3" fill="url(#plateg)"/><rect x="590.5" y="574" width="1.8" height="84" fill="#a6a6a6"/><path d="M568.9,590 V624.5 H566.3 L570.5,645 L574.6999999999999,624.5 H572.1 V590 Z" fill="#8a8a8a" opacity="0.45"/><path d="M577.1999999999999,645 V604.5 H574.5 L578.8,590.3 L583.1,604.5 H580.4 V645 Z" fill="#f2f2f2" opacity="0.7"/><rect x="562.9" y="574" width="11" height="9" rx="3" fill="url(#fitg)" stroke="#8a8a8a" stroke-width="0.5"/><rect x="571.9" y="575" width="10" height="8" rx="3" fill="url(#fitg)" stroke="#8a8a8a" stroke-width="0.5"/><rect x="563.9" y="646" width="11" height="9" rx="3" fill="url(#fitg)" stroke="#8a8a8a" stroke-width="0.5"/><rect x="571.9" y="649" width="12" height="9" rx="3" fill="url(#fitg)" stroke="#8a8a8a" stroke-width="0.5"/><rect x="582.9" y="647" width="8" height="8" rx="3" fill="url(#fitg)" stroke="#8a8a8a" stroke-width="0.5"/><circle cx="562.6999999999999" cy="580" r="3.5" fill="#000"/><circle cx="562.6999999999999" cy="652" r="3.5" fill="#000"/><circle cx="576.4" cy="581.5" r="3" fill="#111"/><circle cx="575.9" cy="654.5" r="3.2" fill="#111"/><text x="592.4" y="595" font-size="14" fill="#2a3552">D1</text>
<path d="M693.4,582.5 H709.4 Q712.4,582.5 712.4,586.5 V656 Q712.4,662.5 705.4,662.5 H693.4 Z" fill="url(#backg)"/><rect x="666.6999999999999" y="571.5" width="30.8" height="89.0" rx="3" fill="url(#plateg)"/><rect x="696.0" y="574.5" width="1.8" height="83.5" fill="#a6a6a6"/><path d="M674.4,590.5 V624.5 H671.8 L676.0,645 L680.1999999999999,624.5 H677.6 V590.5 Z" fill="#8a8a8a" opacity="0.45"/><path d="M682.6999999999999,645 V605.0 H680.0 L684.3,590.8 L688.6,605.0 H685.9 V645 Z" fill="#f2f2f2" opacity="0.7"/><rect x="668.4" y="574.5" width="11" height="9" rx="3" fill="url(#fitg)" stroke="#8a8a8a" stroke-width="0.5"/><rect x="677.4" y="575.5" width="10" height="8" rx="3" fill="url(#fitg)" stroke="#8a8a8a" stroke-width="0.5"/><rect x="669.4" y="646" width="11" height="9" rx="3" fill="url(#fitg)" stroke="#8a8a8a" stroke-width="0.5"/><rect x="677.4" y="649" width="12" height="9" rx="3" fill="url(#fitg)" stroke="#8a8a8a" stroke-width="0.5"/><rect x="688.4" y="647" width="8" height="8" rx="3" fill="url(#fitg)" stroke="#8a8a8a" stroke-width="0.5"/><circle cx="668.1999999999999" cy="580.5" r="3.5" fill="#000"/><circle cx="668.1999999999999" cy="652" r="3.5" fill="#000"/><circle cx="681.9" cy="582.0" r="3" fill="#111"/><circle cx="681.4" cy="654.5" r="3.2" fill="#111"/><text x="697.9" y="595.5" font-size="14" fill="#2a3552">D2</text>
<path d="M799.2,582 H815.2 Q818.2,582 818.2,586 V656 Q818.2,662.5 811.2,662.5 H799.2 Z" fill="url(#backg)"/><rect x="772.5" y="571" width="30.8" height="89.5" rx="3" fill="url(#plateg)"/><rect x="801.8000000000001" y="574" width="1.8" height="84" fill="#a6a6a6"/><path d="M780.2,590 V624.5 H777.6 L781.8000000000001,645 L786.0,624.5 H783.4000000000001 V590 Z" fill="#8a8a8a" opacity="0.45"/><path d="M788.5,645 V604.5 H785.8000000000001 L790.1,590.3 L794.4000000000001,604.5 H791.7 V645 Z" fill="#f2f2f2" opacity="0.7"/><rect x="774.2" y="574" width="11" height="9" rx="3" fill="url(#fitg)" stroke="#8a8a8a" stroke-width="0.5"/><rect x="783.2" y="575" width="10" height="8" rx="3" fill="url(#fitg)" stroke="#8a8a8a" stroke-width="0.5"/><rect x="775.2" y="646" width="11" height="9" rx="3" fill="url(#fitg)" stroke="#8a8a8a" stroke-width="0.5"/><rect x="783.2" y="649" width="12" height="9" rx="3" fill="url(#fitg)" stroke="#8a8a8a" stroke-width="0.5"/><rect x="794.2" y="647" width="8" height="8" rx="3" fill="url(#fitg)" stroke="#8a8a8a" stroke-width="0.5"/><circle cx="774.0" cy="580" r="3.5" fill="#000"/><circle cx="774.0" cy="652" r="3.5" fill="#000"/><circle cx="787.7" cy="581.5" r="3" fill="#111"/><circle cx="787.2" cy="654.5" r="3.2" fill="#111"/><text x="803.7" y="595" font-size="14" fill="#2a3552">D3</text>
<path d="M904.7,582.4 H920.7 Q923.7,582.4 923.7,586.4 V655.5 Q923.7,662.0 916.7,662.0 H904.7 Z" fill="url(#backg)"/><rect x="878.0" y="571.4" width="30.8" height="88.60000000000002" rx="3" fill="url(#plateg)"/><rect x="907.3000000000001" y="574.4" width="1.8" height="83.10000000000002" fill="#a6a6a6"/><path d="M885.7,590.4 V624.0 H883.1 L887.3000000000001,644.5 L891.5,624.0 H888.9000000000001 V590.4 Z" fill="#8a8a8a" opacity="0.45"/><path d="M894.0,644.5 V604.9 H891.3000000000001 L895.6,590.6999999999999 L899.9000000000001,604.9 H897.2 V644.5 Z" fill="#f2f2f2" opacity="0.7"/><rect x="879.7" y="574.4" width="11" height="9" rx="3" fill="url(#fitg)" stroke="#8a8a8a" stroke-width="0.5"/><rect x="888.7" y="575.4" width="10" height="8" rx="3" fill="url(#fitg)" stroke="#8a8a8a" stroke-width="0.5"/><rect x="880.7" y="645.5" width="11" height="9" rx="3" fill="url(#fitg)" stroke="#8a8a8a" stroke-width="0.5"/><rect x="888.7" y="648.5" width="12" height="9" rx="3" fill="url(#fitg)" stroke="#8a8a8a" stroke-width="0.5"/><rect x="899.7" y="646.5" width="8" height="8" rx="3" fill="url(#fitg)" stroke="#8a8a8a" stroke-width="0.5"/><circle cx="879.5" cy="580.4" r="3.5" fill="#000"/><circle cx="879.5" cy="651.5" r="3.5" fill="#000"/><circle cx="893.2" cy="581.9" r="3" fill="#111"/><circle cx="892.7" cy="654.0" r="3.2" fill="#111"/><text x="909.2" y="595.4" font-size="14" fill="#2a3552">D4</text>
<path d="M357,257.0 L373,266.5 L357,276.0 Z M389,257.0 L373,266.5 L389,276.0 Z" fill="#c4dfc4" stroke="#5a5a5a" stroke-width="0.9" stroke-linejoin="miter"/>
<path d="M373,266 V258 Q371,255 375,253 L373,249 L379,246 L367,242 L379,238 L367,234 L374,231" fill="none" stroke="#333" stroke-width="0.9"/>
<path d="M462.3,259.2 L475.5,269.3 L462.3,279.40000000000003 Z M488.7,259.2 L475.5,269.3 L488.7,279.40000000000003 Z" fill="#c4dfc4" stroke="#5a5a5a" stroke-width="0.9" stroke-linejoin="miter"/><line x1="475.5" y1="261.7" x2="475.5" y2="269.3" stroke="#5a5a5a" stroke-width="0.9"/><circle cx="475.5" cy="248.4" r="13.3" fill="#c4dfc4" stroke="#5a5a5a" stroke-width="0.9"/>
<path d="M501.0,466.8 L511.8,474.5 L501.0,482.2 Z M522.6,466.8 L511.8,474.5 L522.6,482.2 Z" fill="#c4dfc4" stroke="#5a5a5a" stroke-width="0.9" stroke-linejoin="miter"/><line x1="511.8" y1="469.59999999999997" x2="511.8" y2="474.5" stroke="#5a5a5a" stroke-width="0.9"/><circle cx="511.8" cy="459.4" r="10.2" fill="#c4dfc4" stroke="#5a5a5a" stroke-width="0.9"/>
<path d="M462.9,530 L476.4,540 L462.9,550 Z M489.9,530 L476.4,540 L489.9,550 Z" fill="#c4dfc4" stroke="#5a5a5a" stroke-width="0.9" stroke-linejoin="miter"/><line x1="476.4" y1="531.6" x2="476.4" y2="540" stroke="#5a5a5a" stroke-width="0.9"/><circle cx="476.4" cy="518.6" r="13" fill="#c4dfc4" stroke="#5a5a5a" stroke-width="0.9"/>
<circle cx="742.9" cy="285.3" r="10.6" fill="#f28a0a" stroke="#5a3412" stroke-width="1.1"/><path d="M742.9,275.09999999999997 L751.38,290.6 H734.42 Z" fill="#000"/>
<circle cx="742.9" cy="324" r="10.6" fill="#f28a0a" stroke="#5a3412" stroke-width="1.1"/><path d="M742.9,313.79999999999995 L751.38,329.3 H734.42 Z" fill="#000"/>
<circle cx="993.6" cy="561.3" r="10.6" fill="#f28a0a" stroke="#5a3412" stroke-width="1.1"/><path d="M993.6,551.0999999999999 L1002.08,566.5999999999999 H985.12 Z" fill="#000"/>
<circle cx="993.6" cy="595.3" r="10.6" fill="#f28a0a" stroke="#5a3412" stroke-width="1.1"/><path d="M993.6,585.0999999999999 L1002.08,600.5999999999999 H985.12 Z" fill="#000"/>
<circle cx="1165.3" cy="479.1" r="10.6" fill="#f28a0a" stroke="#5a3412" stroke-width="1.1"/><path d="M1165.3,468.9 L1173.78,484.40000000000003 H1156.82 Z" fill="#000"/>
<circle cx="1165.5" cy="516.7" r="10.6" fill="#f28a0a" stroke="#5a3412" stroke-width="1.1"/><path d="M1165.5,506.5 L1173.98,522.0 H1157.02 Z" fill="#000"/>
<path d="M306,275.40900000000005 H320.35 V269.7 L329,278.35 L320.35,287 V281.291 H306 Z" fill="url(#arrR)"/>
<path d="M329,379.61 H314.5 V374 L306,382.5 L314.5,391 V385.39 H329 Z" fill="url(#arrL)"/>
<path d="M308,497.082 H323.3 V492 L331,499.7 L323.3,507.4 V502.318 H308 Z" fill="url(#arrR)"/>
<path d="M1222,159.60800000000003 H1229.2 V153.8 L1238,162.60000000000002 L1229.2,171.4 V165.592 H1222 Z" fill="url(#arrR)"/>
<path d="M1248,461.40900000000005 H1235.25 V455.7 L1226.6,464.35 L1235.25,473 V467.291 H1248 Z" fill="url(#arrL)"/>
<path d="M1227,566.6790000000001 H1240.35 V561.3 L1248.5,569.45 L1240.35,577.6 V572.221 H1227 Z" fill="url(#arrR)"/>
<path d="M1246,669.61 H1234.5 V664 L1226,672.5 L1234.5,681 V675.39 H1246 Z" fill="url(#arrL)"/>
<rect x="337.1" y="195.1" width="70.8" height="31.0" rx="3" fill="#212428"/><text x="372.5" y="216.0" font-size="12.5" fill="#efefef" text-anchor="middle">96,40%</text>
<rect x="439.4" y="195.4" width="70.3" height="30.4" rx="3" fill="#212428"/><text x="474.5" y="216.0" font-size="12.5" fill="#efefef" text-anchor="middle">13%</text>
<rect x="301.3" y="290" width="70.5" height="30.7" rx="3" fill="#212428"/><text x="336.6" y="310.8" font-size="12.5" fill="#efefef" text-anchor="middle">83,8°C</text>
<rect x="319.4" y="315.5" width="70.6" height="30.8" rx="3" fill="#212428"/><text x="354.7" y="336.3" font-size="12.5" fill="#efefef" text-anchor="middle">237kW</text>
<rect x="300" y="340.5" width="70.8" height="30.2" rx="3" fill="#212428"/><text x="335.4" y="361.0" font-size="12.5" fill="#efefef" text-anchor="middle">45,3°C</text>
<rect x="536.7" y="282.2" width="70.2" height="30.5" rx="3" fill="#212428"/><text x="571.8" y="302.8" font-size="12.5" fill="#efefef" text-anchor="middle">55,2°C</text>
<rect x="563.9" y="318.4" width="70.6" height="30.1" rx="3" fill="#212428"/><text x="599.2" y="338.8" font-size="12.5" fill="#60ba4c" text-anchor="middle">Ok</text>
<rect x="640.2" y="281.5" width="70.7" height="29.7" rx="3" fill="#212428"/><text x="675.5" y="301.8" font-size="12.5" fill="#efefef" text-anchor="middle">56,7°C</text>
<rect x="749.1" y="248.3" width="70.5" height="30.5" rx="3" fill="#212428"/><text x="784.4" y="268.9" font-size="12.5" fill="#60ba4c" text-anchor="middle">Ok</text>
<rect x="876.4" y="297.3" width="69.6" height="29.7" rx="3" fill="#212428"/><text x="911.2" y="317.5" font-size="12.5" fill="#efefef" text-anchor="middle">49,2°C</text>
<rect x="977.2" y="280.9" width="69.8" height="30.1" rx="3" fill="#212428"/><text x="1012.1" y="301.3" font-size="12.5" fill="#efefef" text-anchor="middle">49,4°C</text>
<rect x="1068.3" y="263.3" width="69.9" height="30.2" rx="3" fill="#212428"/><text x="1103.2" y="283.8" font-size="12.5" fill="#efefef" text-anchor="middle">49,4°C</text>
<rect x="1151.3" y="157.6" width="70.5" height="29.7" rx="3" fill="#212428"/><text x="1186.5" y="177.8" font-size="12.5" fill="#efefef" text-anchor="middle">49,5°C</text>
<rect x="475.4" y="416.9" width="70.4" height="30.1" rx="3" fill="#212428"/><text x="510.6" y="437.3" font-size="12.5" fill="#60ba4c" text-anchor="middle">Zap</text>
<rect x="285.2" y="436.5" width="100.4" height="30.0" rx="3" fill="#212428"/><text x="335.4" y="456.9" font-size="12.5" fill="#efefef" text-anchor="middle">47imp/30minut</text>
<rect x="299.3" y="466" width="70.7" height="25.2" rx="3" fill="#212428"/><text x="334.6" y="482.3" font-size="12.5" fill="#efefef" text-anchor="middle">495kPa</text>
<rect x="506.1" y="507.6" width="70.9" height="30.6" rx="3" fill="#212428"/><text x="541.5" y="528.3" font-size="12.5" fill="#efefef" text-anchor="middle">136kW</text>
<rect x="441" y="552.9" width="70.6" height="30.6" rx="3" fill="#212428"/><text x="476.3" y="573.6" font-size="12.5" fill="#efefef" text-anchor="middle">9%</text>
<rect x="585.6" y="560.5" width="70.4" height="30.0" rx="3" fill="#212428"/><text x="620.8" y="580.9" font-size="12.5" fill="#efefef" text-anchor="middle">36,9°C</text>
<rect x="598.7" y="605.6" width="70.3" height="30.0" rx="3" fill="#212428"/><text x="633.9" y="626.0" font-size="12.5" fill="#60ba4c" text-anchor="middle">Ok</text>
<rect x="689.1" y="560.5" width="69.9" height="30.0" rx="3" fill="#212428"/><text x="724.0" y="580.9" font-size="12.5" fill="#efefef" text-anchor="middle">36,6°C</text>
<rect x="797" y="559.2" width="70.3" height="30.2" rx="3" fill="#212428"/><text x="832.1" y="579.7" font-size="12.5" fill="#efefef" text-anchor="middle">37,9°C</text>
<rect x="809.4" y="603.5" width="70.4" height="30.3" rx="3" fill="#212428"/><text x="844.6" y="624.0" font-size="12.5" fill="#60ba4c" text-anchor="middle">Ok</text>
<rect x="894.2" y="559" width="70.8" height="30.3" rx="3" fill="#212428"/><text x="929.6" y="579.5" font-size="12.5" fill="#efefef" text-anchor="middle">39,9°C</text>
<rect x="1086" y="445.6" width="70.0" height="28.8" rx="3" fill="#212428"/><text x="1121.0" y="465.4" font-size="12.5" fill="#60ba4c" text-anchor="middle">Zap</text>
<rect x="1087.5" y="492.8" width="70.3" height="30.4" rx="3" fill="#212428"/><text x="1122.7" y="513.4" font-size="12.5" fill="#e5452c" text-anchor="middle">Vyp</text>
<rect x="938.6" y="524.5" width="69.4" height="29.8" rx="3" fill="#212428"/><text x="973.3" y="544.8" font-size="12.5" fill="#60ba4c" text-anchor="middle">Ok</text>
<rect x="999.5" y="523.7" width="70.1" height="30.3" rx="3" fill="#212428"/><text x="1034.5" y="544.2" font-size="12.5" fill="#efefef" text-anchor="middle">47%</text>
<rect x="1093.4" y="544" width="69.6" height="30.5" rx="3" fill="#212428"/><text x="1128.2" y="564.6" font-size="12.5" fill="#efefef" text-anchor="middle">390kPa</text>
<rect x="1156" y="544" width="69.7" height="30.5" rx="3" fill="#212428"/><text x="1190.8" y="564.6" font-size="12.5" fill="#efefef" text-anchor="middle">37,0°C</text>
<rect x="940.9" y="604.9" width="70.1" height="30.6" rx="3" fill="#212428"/><text x="976.0" y="625.6" font-size="12.5" fill="#60ba4c" text-anchor="middle">Ok</text>
<rect x="1005" y="604.9" width="70.8" height="30.6" rx="3" fill="#212428"/><text x="1040.4" y="625.6" font-size="12.5" fill="#efefef" text-anchor="middle">0%</text>
<rect x="1090" y="671.25" width="66.0" height="30.5" rx="3" fill="#212428"/><text x="1123.0" y="691.9" font-size="12.5" fill="#efefef" text-anchor="middle">353kPa</text>
<rect x="1152" y="671.25" width="70.3" height="30.5" rx="3" fill="#212428"/><text x="1187.2" y="691.9" font-size="12.5" fill="#efefef" text-anchor="middle">34,4°C</text>
<circle cx="1251.3" cy="677" r="17.4" fill="#ececec"/>
<path d="M1245.4,673.6 A6.9,6.9 0 1 1 1246.3,681.8" fill="none" stroke="#222" stroke-width="1.5"/>
<path d="M1242.6,675.2 L1244.9,678.3 L1247.9,675.7" fill="none" stroke="#222" stroke-width="1.6" stroke-linejoin="miter"/>
<rect x="25.5" y="687.5" width="189.5" height="27.6" fill="#1b1b1b"/>
<text x="31" y="711.7" font-size="30" font-weight="bold" font-style="italic" fill="#f04a14" textLength="29" lengthAdjust="spacingAndGlyphs">O</text>
<text x="58.5" y="711.7" font-size="19" font-weight="bold" font-style="italic" fill="#a9a9a9" textLength="39" lengthAdjust="spacingAndGlyphs">PEN</text>
<text x="105" y="711.7" font-size="30" font-weight="bold" font-style="italic" fill="#f04a14" textLength="28" lengthAdjust="spacingAndGlyphs">S</text>
<text x="128.5" y="711.7" font-size="19" font-weight="bold" font-style="italic" fill="#a9a9a9" textLength="84" lengthAdjust="spacingAndGlyphs">OLUTION</text>
</svg></body></html>
